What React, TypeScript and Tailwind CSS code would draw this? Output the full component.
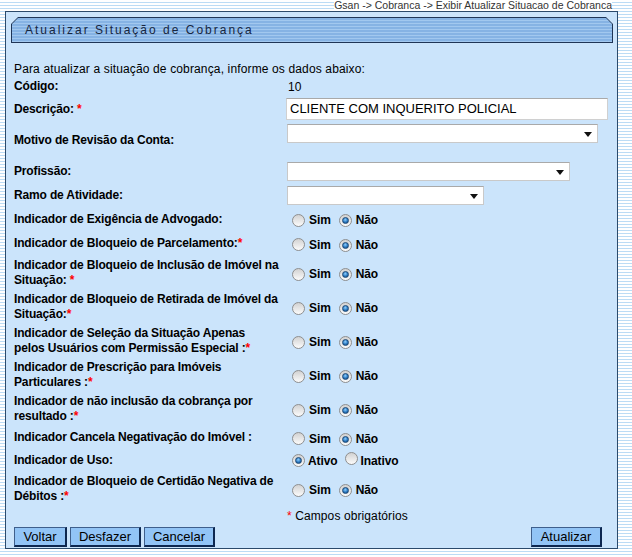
import React from "react";

function Radio({ checked }: { checked?: boolean }) {
  return (
    <span className="inline-flex h-[13px] w-[13px] shrink-0 items-center justify-center rounded-full border border-[#8e8e8e] bg-[linear-gradient(to_bottom,#d2d2d2,#fbfbfb)]">
      {checked ? (
        <span className="h-[7px] w-[7px] rounded-full border border-[#1d4a78] bg-[radial-gradient(circle_at_45%_35%,#8fd0ff,#2a78c0_55%,#0f3f70)]" />
      ) : null}
    </span>
  );
}

function SimNao() {
  return (
    <div className="ml-[5px] mt-[2px] flex items-center font-bold tracking-[-0.1px]">
      <Radio />
      <span className="ml-[4px]">Sim</span>
      <span className="ml-[8px]">
        <Radio checked />
      </span>
      <span className="ml-[4px]">Não</span>
    </div>
  );
}

function Select({ w }: { w: string }) {
  return (
    <div className={`relative h-[19px] ${w} border border-[#c9c9c9] border-t-[#a9a9a9] bg-white`}>
      <svg
        className="absolute right-[5px] top-[7px]"
        width="8"
        height="5"
        viewBox="0 0 8 5"
      >
        <path d="M0 0h8L4 5z" fill="#111" />
      </svg>
    </div>
  );
}

function Star() {
  return <span className="text-[#ff0000]">*</span>;
}

function Row({
  h,
  label,
  children,
  top,
}: {
  h: string;
  label: React.ReactNode;
  children?: React.ReactNode;
  top?: boolean;
}) {
  return (
    <div className={`flex ${h} items-center`}>
      <div className="w-[273px] shrink-0 whitespace-nowrap font-bold leading-[15px] tracking-[-0.15px]">
        {label}
      </div>
      <div className={`flex h-full grow ${top ? "items-start pt-[3px]" : "items-center"}`}>
        {children}
      </div>
    </div>
  );
}

function Btn({ children, w }: { children: React.ReactNode; w: string }) {
  return (
    <button
      className={`h-[20px] ${w} border border-[#3f5f8c] border-b-[#0d2750] border-r-[#0d2750] border-b-2 border-r-2 bg-[#92c4f6] text-[13px] leading-[16px] text-black`}
    >
      {children}
    </button>
  );
}

export default function App() {
  return (
    <div className="min-h-[557px] w-full bg-[repeating-linear-gradient(to_bottom,#ffffff_0px,#ffffff_2px,#bcdcf5_2px,#bcdcf5_3px)] font-['Liberation_Sans',Arial,sans-serif] text-[12px] text-black">
      <div className="flex h-[11px] justify-end pr-[20px]">
        <span className="bg-white text-[10.5px] leading-[11px] text-[#333]">
          Gsan -&gt; Cobranca -&gt; Exibir Atualizar Situacao de Cobranca
        </span>
      </div>

      <div className="ml-[5px] w-[613px] border border-[#2b4a6b] bg-[#cbe4fb] pb-[1px] pl-[5px] pr-[4px] pt-[5px]">
        <div className="h-[26px] bg-[#1f3556] p-px [clip-path:polygon(7px_0,calc(100%-7px)_0,100%_7px,100%_100%,0_100%,0_7px)]">
          <div className="flex h-full items-center bg-[repeating-linear-gradient(to_bottom,#86b3e4_0px,#86b3e4_2px,#a2c8ef_2px,#a2c8ef_3px)] pl-[13px] text-[12px] tracking-[2px] text-[#16263f] [clip-path:polygon(6px_0,calc(100%-6px)_0,100%_6px,100%_100%,0_100%,0_6px)]">
            Atualizar Situação de Cobrança
          </div>
        </div>

        <div className="ml-[3px]">
          <div className="h-[18px]" />
          <div className="flex h-[15px] items-center tracking-[0.14px]">
            Para atualizar a situação de cobrança, informe os dados abaixo:
          </div>
          <Row h="h-[21px]" label="Código:">
            <span className="ml-[1px] font-normal">10</span>
          </Row>
          <Row
            h="h-[24px]"
            label={
              <>
                Descrição: <Star />
              </>
            }
          >
            <div className="-ml-[1px] flex h-[22px] w-[322px] items-center border border-[#d0d0d0] border-t-[#a9a9a9] bg-white pl-[3px] text-[13px]">
              CLIENTE COM INQUERITO POLICIAL
            </div>
          </Row>
          <Row h="h-[38px]" label="Motivo de Revisão da Conta:" top>
            <Select w="w-[311px]" />
          </Row>
          <Row h="h-[24px]" label="Profissão:">
            <Select w="w-[283px]" />
          </Row>
          <Row h="h-[24px]" label="Ramo de Atividade:">
            <Select w="w-[197px]" />
          </Row>
          <Row h="h-[24px]" label="Indicador de Exigência de Advogado:">
            <SimNao />
          </Row>
          <Row
            h="h-[25px]"
            label={
              <>
                Indicador de Bloqueio de Parcelamento:<Star />
              </>
            }
          >
            <SimNao />
          </Row>
          <Row
            h="h-[34px]"
            label={
              <>
                Indicador de Bloqueio de Inclusão de Imóvel na
                <br />
                Situação: <Star />
              </>
            }
          >
            <SimNao />
          </Row>
          <Row
            h="h-[34px]"
            label={
              <>
                Indicador de Bloqueio de Retirada de Imóvel da
                <br />
                Situação:<Star />
              </>
            }
          >
            <SimNao />
          </Row>
          <Row
            h="h-[34px]"
            label={
              <>
                Indicador de Seleção da Situação Apenas
                <br />
                pelos Usuários com Permissão Especial :<Star />
              </>
            }
          >
            <SimNao />
          </Row>
          <Row
            h="h-[34px]"
            label={
              <>
                Indicador de Prescrição para Imóveis
                <br />
                Particulares :<Star />
              </>
            }
          >
            <SimNao />
          </Row>
          <Row
            h="h-[34px]"
            label={
              <>
                Indicador de não inclusão da cobrança por
                <br />
                resultado :<Star />
              </>
            }
          >
            <SimNao />
          </Row>
          <Row h="h-[23px]" label="Indicador Cancela Negativação do Imóvel :">
            <SimNao />
          </Row>
          <Row h="h-[23px]" label="Indicador de Uso:">
            <div className="ml-[5px] flex items-center font-bold tracking-[-0.1px]">
              <Radio checked />
              <span className="ml-[3px]">Ativo</span>
              <span className="ml-[7px]">
                <Radio />
              </span>
              <span className="ml-[3px]">Inativo</span>
            </div>
          </Row>
          <Row
            h="h-[34px]"
            label={
              <>
                Indicador de Bloqueio de Certidão Negativa de
                <br />
                Débitos :<Star />
              </>
            }
          >
            <SimNao />
          </Row>
          <Row h="h-[20px]" label="">
            <span className="tracking-[0.1px]">
              <Star /> Campos obrigatórios
            </span>
          </Row>
          <div className="mt-[1px] flex items-center pr-[11px]">
            <div className="flex gap-[3px]">
              <Btn w="w-[53px]">Voltar</Btn>
              <Btn w="w-[71px]">Desfazer</Btn>
              <Btn w="w-[71px]">Cancelar</Btn>
            </div>
            <div className="grow" />
            <Btn w="w-[71px]">Atualizar</Btn>
          </div>
        </div>
      </div>
    </div>
  );
}
